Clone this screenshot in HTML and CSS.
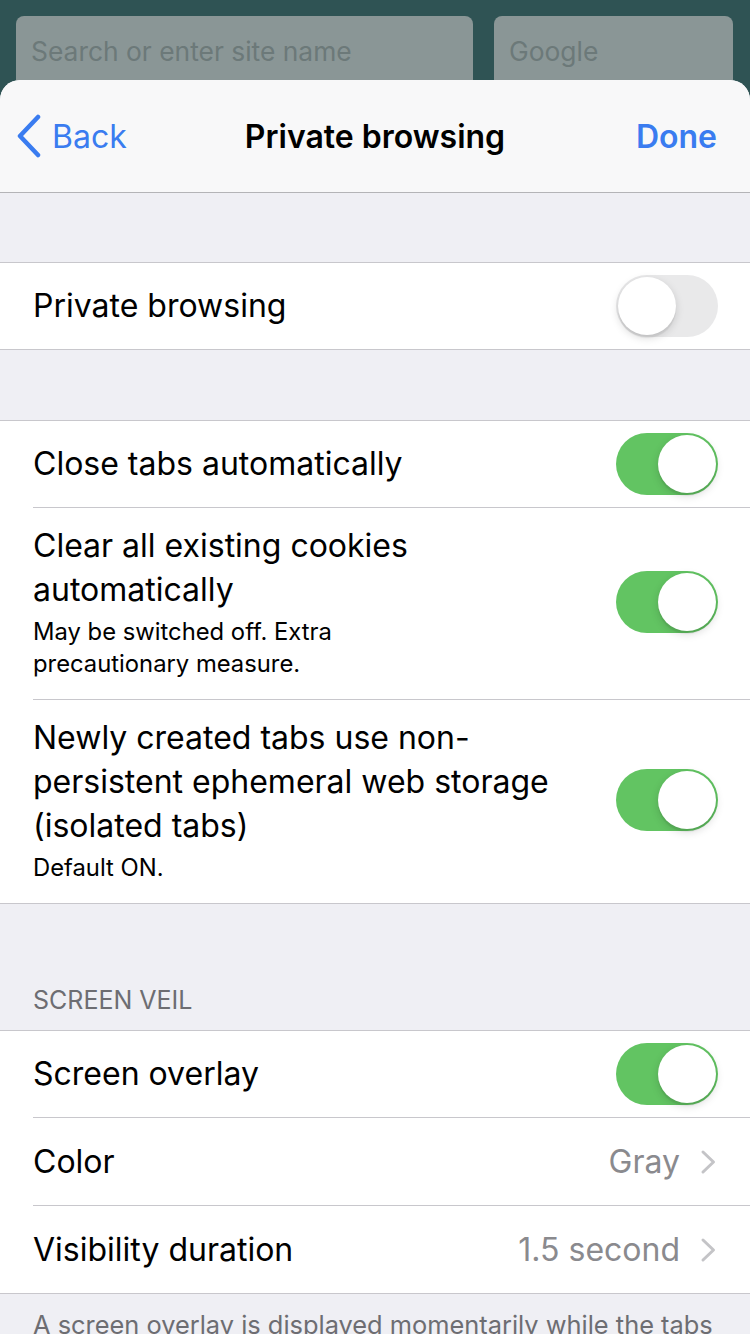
FILE: index.html
```html
<!DOCTYPE html>
<html lang="en">
<head>
  <meta charset="UTF-8">
  <meta name="viewport" content="width=device-width, initial-scale=1.0">
  <title>Private browsing</title>
  <link rel="stylesheet" href="styles.css">
</head>
<body>
  <div class="browser-bar">
    <div class="field field-url">Search or enter site name</div>
    <div class="field field-engine">Google</div>
  </div>

  <div class="sheet">
    <div class="navbar">
      <a class="nav-back">
        <svg width="26" height="44" viewBox="0 0 26 44"><path d="M22 3 L4 22 L22 41" fill="none" stroke="currentColor" stroke-width="4.5" stroke-linecap="round" stroke-linejoin="round"/></svg>
        <span>Back</span>
      </a>
      <div class="nav-title">Private browsing</div>
      <a class="nav-done">Done</a>
    </div>

    <div class="spacer"></div>
    <div class="group">
      <div class="row">
        <div class="row-text"><div class="label">Private browsing</div></div>
        <div class="switch"></div>
      </div>
    </div>

    <div class="spacer wide"></div>
    <div class="group">
      <div class="row">
        <div class="row-text"><div class="label">Close tabs automatically</div></div>
        <div class="switch on"></div>
      </div>
      <div class="row tall">
        <div class="row-text">
          <div class="label">Clear all existing cookies automatically</div>
          <div class="note narrow">May be switched off. Extra precautionary measure.</div>
        </div>
        <div class="switch on"></div>
      </div>
      <div class="row tall">
        <div class="row-text">
          <div class="label">Newly created tabs use non-persistent ephemeral web storage (isolated tabs)</div>
          <div class="note">Default ON.</div>
        </div>
        <div class="switch on"></div>
      </div>
    </div>

    <div class="section-head">SCREEN VEIL</div>
    <div class="group veil">
      <div class="row">
        <div class="row-text"><div class="label">Screen overlay</div></div>
        <div class="switch on"></div>
      </div>
      <div class="row link">
        <div class="row-text"><div class="label">Color</div></div>
        <div class="value">Gray</div>
        <svg class="chevron" width="16" height="26" viewBox="0 0 16 26"><path d="M3 3 L13.5 13 L3 23" fill="none" stroke="currentColor" stroke-width="3" stroke-linecap="round" stroke-linejoin="round"/></svg>
      </div>
      <div class="row link">
        <div class="row-text"><div class="label">Visibility duration</div></div>
        <div class="value">1.5 second</div>
        <svg class="chevron" width="16" height="26" viewBox="0 0 16 26"><path d="M3 3 L13.5 13 L3 23" fill="none" stroke="currentColor" stroke-width="3" stroke-linecap="round" stroke-linejoin="round"/></svg>
      </div>
    </div>
    <div class="section-foot">A screen overlay is displayed momentarily while the tabs are switched.</div>
  </div>
</body>
</html>
```

FILE: styles.css
```css
body {
  margin: 0;
  background-color: #2f5354;
  font-family: Inter, "Noto Sans", sans-serif;
  color: #000;
  height: 1334px;
  overflow: hidden;
}
.browser-bar {
  display: flex;
  gap: 21px;
  height: 80px;
  padding: 16px 17px 0 16px;
  box-sizing: border-box;
  overflow: hidden;
}
.field {
  height: 72px;
  border-radius: 8px;
  background-color: #8a9696;
  color: #6c7979;
  font-size: 26.4px;
  padding: 19px 15px 0;
  box-sizing: border-box;
}
.field-url {
  width: 457px;
}
.field-engine {
  flex: 1;
}
.sheet {
  background-color: #efeff4;
  border-radius: 20px 20px 0 0;
  overflow: hidden;
  height: 1254px;
}
.navbar {
  display: flex;
  align-items: center;
  justify-content: space-between;
  height: 112px;
  padding: 0 33px 0 16px;
  background-color: #f8f8f9;
  border-bottom: 1px solid #b4b4b7;
  position: relative;
}
.nav-back {
  display: flex;
  align-items: center;
  gap: 10px;
  color: #3a7cf0;
  font-size: 32px;
}
.nav-title {
  position: absolute;
  left: 0;
  right: 0;
  text-align: center;
  font-size: 32px;
  font-weight: 600;
  pointer-events: none;
}
.nav-done {
  color: #3a7cf0;
  font-size: 32px;
  font-weight: 600;
}
.spacer {
  height: 69px;
}
.spacer.wide {
  height: 70px;
}
.group {
  background-color: #fff;
  border-top: 1px solid #c8c7cc;
  border-bottom: 1px solid #c8c7cc;
  padding-left: 33px;
}
.row {
  display: flex;
  align-items: center;
  min-height: 86px;
  padding-right: 32px;
  border-top: 1px solid #c8c7cc;
}
.row:first-child {
  border-top: none;
}
.row.tall {
  padding-top: 16px;
  padding-bottom: 19px;
}
.veil .row {
  min-height: 87px;
}
.veil .row:first-child {
  min-height: 86px;
}
.row.link {
  padding-right: 34px;
}
.row-text {
  flex: 1;
}
.label {
  font-size: 32px;
  line-height: 44px;
  max-width: 540px;
}
.note {
  margin-top: 4px;
  font-size: 23.8px;
  line-height: 32px;
}
.note.narrow {
  max-width: 340px;
}
.value {
  font-size: 32px;
  color: #8a8a8e;
  margin-right: 20px;
}
.chevron {
  color: #c4c4c7;
}
.switch {
  width: 102px;
  height: 62px;
  border-radius: 31px;
  background-color: #e9e9ea;
  position: relative;
  flex-shrink: 0;
}
.switch::after {
  content: "";
  position: absolute;
  top: 2px;
  left: 2px;
  width: 58px;
  height: 58px;
  border-radius: 50%;
  background-color: #fff;
  box-shadow: 0 3px 8px rgba(0, 0, 0, 0.15), 0 3px 1px rgba(0, 0, 0, 0.06);
}
.switch.on {
  background-color: #62c462;
}
.switch.on::after {
  left: 42px;
}
.section-head {
  padding: 81px 33px 15px;
  font-size: 25px;
  line-height: 30px;
  color: #6d6d72;
}
.section-foot {
  padding: 14px 33px;
  font-size: 25.4px;
  line-height: 34px;
  color: #6d6d72;
}
```
